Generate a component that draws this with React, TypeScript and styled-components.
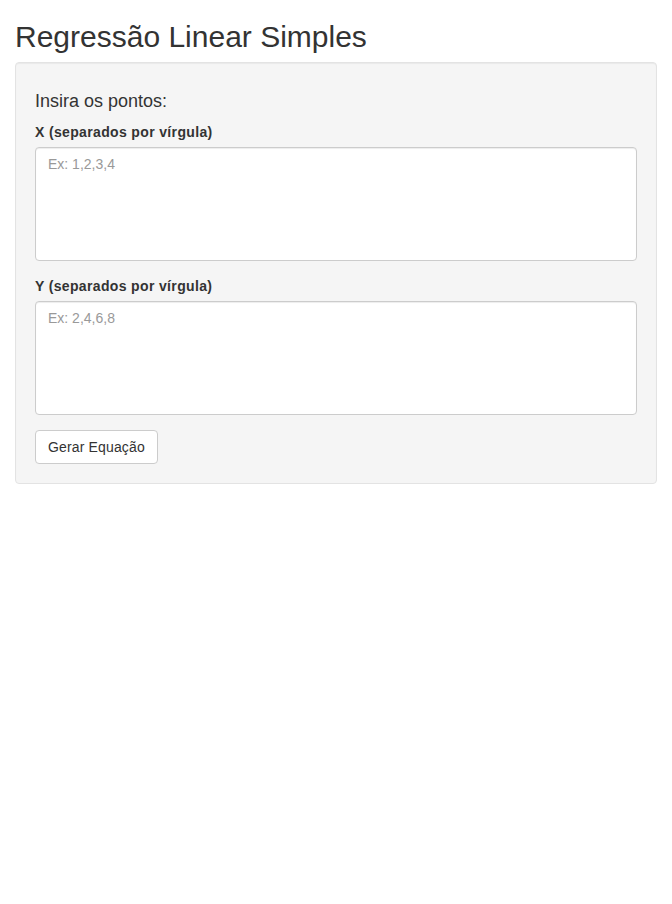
import React from "react";
import styled, { createGlobalStyle } from "styled-components";

const GlobalStyle = createGlobalStyle`
  * {
    box-sizing: border-box;
  }
  body {
    margin: 0;
    background: #fff;
    color: #333;
    font-family: "Liberation Sans", Arial, Helvetica, sans-serif;
    font-size: 14px;
    line-height: 1.42857143;
  }
`;

const Container = styled.div`
  padding: 0 15px;
`;

const Title = styled.h2`
  margin: 20px 0 9px;
  font-size: 30px;
  font-weight: 500;
  line-height: 1.1;
  color: #333;
`;

const Well = styled.form`
  min-height: 20px;
  padding: 19px;
  margin-bottom: 20px;
  background: #f5f5f5;
  border: 1px solid #e3e3e3;
  border-radius: 4px;
  box-shadow: inset 0 1px 1px rgba(0, 0, 0, 0.05);
`;

const Heading = styled.h4`
  margin: 10px 0;
  font-size: 18px;
  font-weight: 500;
  line-height: 1.1;
`;

const FormGroup = styled.div`
  margin-bottom: 15px;
`;

const Label = styled.label`
  display: inline-block;
  max-width: 100%;
  margin-bottom: 5px;
  font-weight: bold;
  letter-spacing: 0.35px;
`;

const TextArea = styled.textarea`
  display: block;
  width: 100%;
  height: 114px;
  padding: 6px 12px;
  font-family: inherit;
  font-size: 14px;
  line-height: 1.42857143;
  color: #555;
  background: #fff;
  border: 1px solid #ccc;
  border-radius: 4px;
  box-shadow: inset 0 1px 1px rgba(0, 0, 0, 0.075);
  resize: none;
  &::placeholder {
    color: #999;
  }
`;

const Button = styled.button`
  display: inline-block;
  padding: 6px 12px;
  font-family: inherit;
  font-size: 14px;
  line-height: 1.42857143;
  letter-spacing: 0.15px;
  color: #333;
  background: #fff;
  border: 1px solid #ccc;
  border-radius: 4px;
  cursor: pointer;
`;

function App() {
  return (
    <Container>
      <GlobalStyle />
      <Title>Regressão Linear Simples</Title>
      <Well onSubmit={(e) => e.preventDefault()}>
        <Heading>Insira os pontos:</Heading>
        <FormGroup>
          <Label htmlFor="x">X (separados por vírgula)</Label>
          <TextArea id="x" rows={5} placeholder="Ex: 1,2,3,4" />
        </FormGroup>
        <FormGroup>
          <Label htmlFor="y">Y (separados por vírgula)</Label>
          <TextArea id="y" rows={5} placeholder="Ex: 2,4,6,8" />
        </FormGroup>
        <Button type="button">Gerar Equação</Button>
      </Well>
    </Container>
  );
}

export default App;
